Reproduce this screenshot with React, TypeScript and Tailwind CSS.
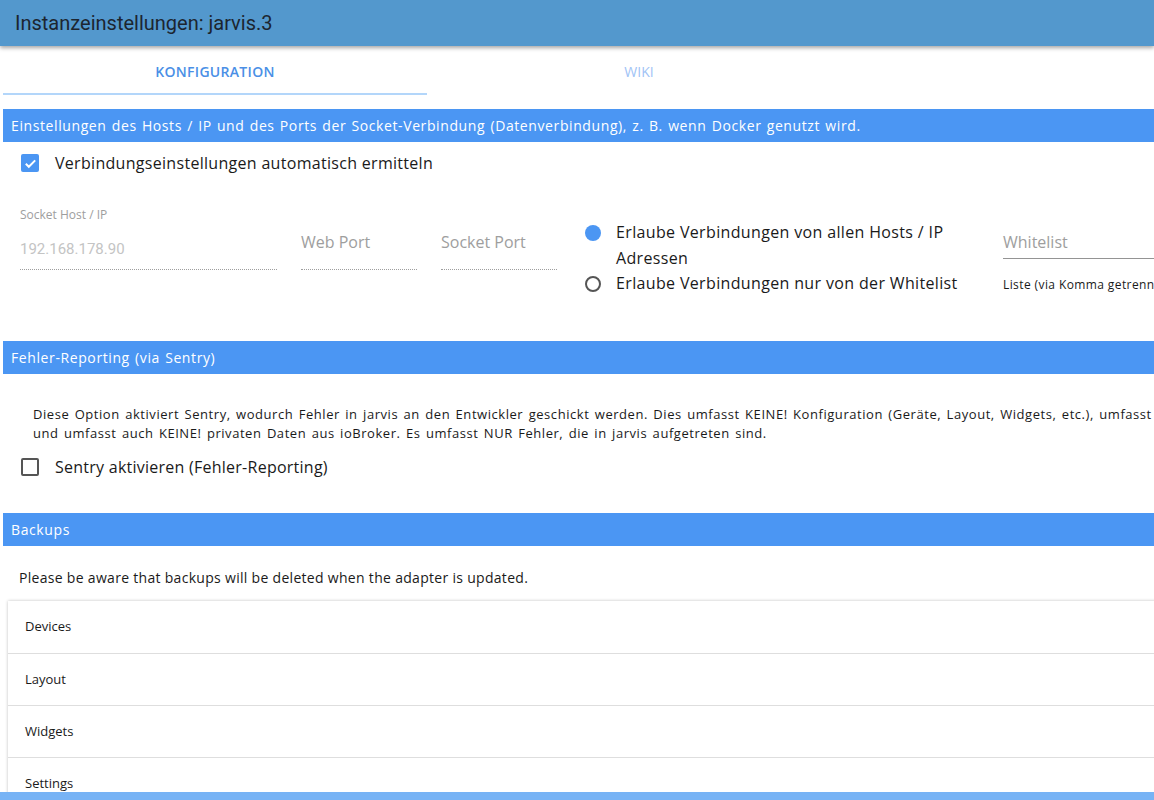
import React from "react";

const font = { fontFamily: '"Open Sans", "DejaVu Sans", sans-serif' };

function SectionHeader({ children }: { children: React.ReactNode }) {
  return (
    <div className="ml-[3px] h-[33px] bg-[#4b96f3] flex items-center pl-2 text-white text-[14px] tracking-[0.6px] [word-spacing:1px] whitespace-nowrap">
      {children}
    </div>
  );
}

function Field({ label, value, placeholder, width }: { label?: string; value?: string; placeholder?: string; width: string }) {
  return (
    <div className={`${width} flex flex-col`}>
      <div className="h-[18px] text-[12px] text-[#9e9e9e] leading-[18px]">{label}</div>
      <div className="h-[45px] flex items-center text-[16px] leading-none">
        {value ? (
          <span className="text-[#c4c4c4] text-[15px] mt-[6px]" style={{ fontFamily: "Roboto, sans-serif" }}>{value}</span>
        ) : (
          <span className="text-[#9e9e9e] mt-[-10px]">{placeholder}</span>
        )}
      </div>
      <div className="border-b border-dotted border-[#9e9e9e]" />
    </div>
  );
}

export default function App() {
  return (
    <div className="w-[1154px] h-[800px] overflow-hidden bg-white relative" style={font}>
      <div className="h-[46px] bg-[#5398cd] flex items-center pl-[15px] shadow-[0_2px_4px_rgba(0,0,0,0.35)] relative z-10">
        <span className="text-[20px] text-[#1c2530]" style={{ fontFamily: "Roboto, sans-serif" }}>Instanzeinstellungen: jarvis.3</span>
      </div>
      <div className="w-[1400px]">
        <div className="flex h-[49px] ml-[3px]">
          <div className="w-[424px] flex flex-col">
            <div className="flex-1 flex items-center justify-center pt-[3px] text-[14px] font-semibold text-[#4a8fe6] tracking-[0.3px]">KONFIGURATION</div>
            <div className="h-[2px] bg-[#b3d6fa]" />
          </div>
          <div className="w-[424px] flex items-center justify-center pt-[1px] text-[14px] text-[#9fc3f6]">WIKI</div>
        </div>
        <div className="h-[14px]" />
        <SectionHeader>Einstellungen des Hosts / IP und des Ports der Socket-Verbindung (Datenverbindung), z. B. wenn Docker genutzt wird.</SectionHeader>
        <div className="flex items-center h-[42px] pl-[21px]">
          <div className="w-[18px] h-[18px] rounded-[2px] bg-[#4b96f3] flex items-center justify-center">
            <svg width="15" height="15" viewBox="0 0 24 24" fill="none" stroke="white" strokeWidth="3.2"><path d="M4.5 12.5l4.8 4.8L19.5 7" /></svg>
          </div>
          <span className="ml-4 text-[16px] text-[#1a1a1a] tracking-[0.3px]">Verbindungseinstellungen automatisch ermitteln</span>
        </div>
        <div className="flex items-start pt-[22px] pl-[20px] h-[157px]">
          <Field label="Socket Host / IP" value="192.168.178.90" width="w-[257px]" />
          <div className="w-[24px]" />
          <Field placeholder="Web Port" width="w-[116px]" />
          <div className="w-[24px]" />
          <Field placeholder="Socket Port" width="w-[116px]" />
          <div className="w-[28px]" />
          <div className="w-[418px] flex flex-col pt-[14px] text-[16px] text-[#1a1a1a] tracking-[0.35px]">
            <div className="flex items-start">
              <div className="w-[16px] h-[16px] rounded-full bg-[#4b96f3] mt-[4.5px] shrink-0" />
              <div className="ml-[15px] leading-[25.5px]">Erlaube Verbindungen von allen Hosts / IP<br />Adressen</div>
            </div>
            <div className="flex items-center">
              <div className="w-[16px] h-[16px] rounded-full border-2 border-[#555] shrink-0" />
              <div className="ml-[15px] leading-[25.5px]">Erlaube Verbindungen nur von der Whitelist</div>
            </div>
          </div>
          <div className="w-[200px] flex flex-col pt-[28px]">
            <div className="h-[24px] text-[16px] text-[#9e9e9e] leading-none">Whitelist</div>
            <div className="border-b border-[#949494]" />
            <div className="text-[12px] leading-[16px] text-[#1a1a1a] mt-[18px] whitespace-nowrap tracking-[0.4px]">Liste (via Komma getrennt)</div>
          </div>
        </div>
        <SectionHeader>Fehler-Reporting (via Sentry)</SectionHeader>
        <div className="pl-[33px] pt-[31px] text-[13px] leading-[19px] text-[#1a1a1a] tracking-[0.55px] [word-spacing:1.5px]">
          <div className="whitespace-nowrap">Diese Option aktiviert Sentry, wodurch Fehler in jarvis an den Entwickler geschickt werden. Dies umfasst KEINE! Konfiguration (Geräte, Layout, Widgets, etc.), umfasst</div>
          <div className="whitespace-nowrap">und umfasst auch KEINE! privaten Daten aus ioBroker. Es umfasst NUR Fehler, die in jarvis aufgetreten sind.</div>
        </div>
        <div className="flex items-center h-[42px] pl-[21px] mt-[3px]">
          <div className="w-[18px] h-[18px] rounded-[2px] border-2 border-[#555]" />
          <span className="ml-4 text-[16px] text-[#1a1a1a] tracking-[0.25px]">Sentry aktivieren (Fehler-Reporting)</span>
        </div>
        <div className="h-[25px]" />
        <SectionHeader>Backups</SectionHeader>
        <div className="pl-[19px] h-[55px] pt-[22px] leading-[20px] text-[14px] text-[#1a1a1a] tracking-[0.3px]">Please be aware that backups will be deleted when the adapter is updated.</div>
        <div className="ml-[8px] shadow-[0_0_3px_rgba(0,0,0,0.25)] bg-white">
          {["Devices", "Layout", "Widgets", "Settings"].map((t, i) => (
            <div key={t} className={`h-[52px] flex items-center pl-[17px] text-[13px] text-[#1a1a1a] ${i > 0 ? "border-t border-[#dedede]" : ""}`}>{t}</div>
          ))}
        </div>
      </div>
      <div className="absolute left-0 right-0 bottom-0 h-[8px] bg-[#77b3f5]" />
    </div>
  );
}
